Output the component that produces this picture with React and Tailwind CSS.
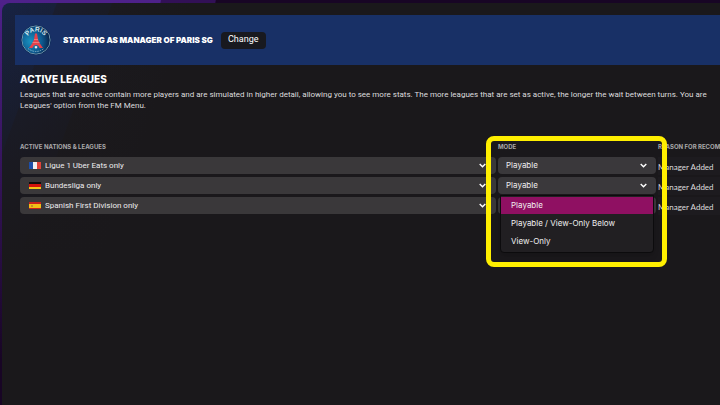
import React from 'react'

const leagues = [
  { name: 'Ligue 1 Uber Eats only', flag: 'fr', reason: 'Manager Added' },
  { name: 'Bundesliga only', flag: 'de', reason: 'Manager Added' },
  { name: 'Spanish First Division only', flag: 'es', reason: 'Manager Added' },
]

const modes = ['Playable', 'Playable / View-Only Below', 'View-Only']

const Flag = ({ code }) => (
  <svg viewBox="0 0 12 7" className="w-3 h-[7px]" aria-hidden="true">
    {code === 'fr' && (
      <>
        <rect width="12" height="7" fill="#f1f1f1" />
        <rect width="4" height="7" fill="#1d4fa8" />
        <rect x="8" width="4" height="7" fill="#e0433a" />
      </>
    )}
    {code === 'de' && (
      <>
        <rect width="12" height="7" fill="#110d0c" />
        <rect y="2" width="12" height="3" fill="#d3120b" />
        <rect y="5" width="12" height="2" fill="#f3c318" />
      </>
    )}
    {code === 'es' && (
      <>
        <rect width="12" height="7" fill="#c9201c" />
        <rect y="2" width="12" height="4" fill="#f0bd17" />
        <rect x="2" y="3" width="2" height="2" fill="#c58a2a" />
      </>
    )}
  </svg>
)

const Chevron = ({ className }) => (
  <svg viewBox="0 0 7 5" className={`absolute w-[7px] h-[5px] pointer-events-none ${className}`} aria-hidden="true">
    <path d="M0.7 0.9 L3.5 3.7 L6.3 0.9" fill="none" stroke="#ffffff" strokeWidth="1.4" />
  </svg>
)

const Crest = () => (
  <svg viewBox="0 0 60 60" className="w-[30px] h-[30px] shrink-0" role="img" aria-label="Paris SG">
    <defs>
      <radialGradient id="crestBlue" cx="30%" cy="55%" r="70%">
        <stop offset="0" stopColor="#1a93c0" />
        <stop offset="0.6" stopColor="#0d5a90" />
        <stop offset="1" stopColor="#09264e" />
      </radialGradient>
      <path id="crestTop" d="M12 29 A18 16 0 0 1 48 29" />
    </defs>
    <circle cx="30" cy="30" r="29.5" fill="#0a2d55" />
    <circle cx="30" cy="30" r="28" fill="none" stroke="#9dc0d0" strokeWidth="1.6" />
    <circle cx="30" cy="30" r="27" fill="url(#crestBlue)" />
    <text fontFamily="Liberation Sans, sans-serif" fontSize="13" fontWeight="700" fill="#d4e8ee" textAnchor="middle">
      <textPath href="#crestTop" startOffset="50%">PARIS</textPath>
    </text>
    {/* tower */}
    <path d="M28 17 H32 L34 29 L37 36 L44 46 H37 Q35 40 30 40 Q25 40 23 46 H16 L23 36 L26 29 Z" fill="#e5424b" />
    <path d="M23 35 H37 M26 29 H34" stroke="#f08b86" strokeWidth="1.5" />
    <path d="M27 44 Q30 40 33 44 L31 47 H29 Z" fill="#eef2f2" />
    <path d="M14 47 Q30 59 46 47" fill="none" stroke="#8fb9cd" strokeWidth="1.8" strokeDasharray="3 2" />
  </svg>
)

const ModeMenu = () => (
  <ul
    role="listbox"
    aria-label="Mode options"
    className="absolute z-10 top-[18px] left-[2px] right-[2px] h-[58px] pt-px rounded-b-sm border border-[#0c0b0d] bg-[#211f22] text-[#f0eff0] shadow-md"
  >
    {modes.map((mode, idx) => (
      <li
        key={mode}
        role="option"
        aria-selected={idx === 0}
        className={`h-[17px] pl-[10px] leading-[17px] mb-px ${idx === 0 ? 'bg-[#8f1062]' : ''}`}
      >
        {mode}
      </li>
    ))}
  </ul>
)

const LeagueTable = () => (
  <div className="relative mt-[30px]">
    <table className="w-full table-fixed border-collapse text-left">
      <colgroup>
        <col />
        <col className="w-[160px]" />
        <col className="w-[62px]" />
      </colgroup>
      <thead>
        <tr className="h-4 text-[6px] leading-3 text-[#a9a8aa] whitespace-nowrap">
          <th className="p-0 align-top font-bold">ACTIVE NATIONS &amp; LEAGUES</th>
          <th className="p-0 align-top font-bold">MODE</th>
          <th className="p-0 align-top font-bold">REASON FOR RECOM</th>
        </tr>
      </thead>
      <tbody>
        {leagues.map((league, idx) => (
          <tr key={league.name} className="h-5">
            <td className="p-0 pr-[2px] align-top">
              <div className="relative">
                <span className="absolute left-[9px] top-[5px]">
                  <Flag code={league.flag} />
                </span>
                <select
                  aria-label="League"
                  className="block w-full h-[17px] pl-[25px] appearance-none rounded-sm bg-[#3a383a] text-[#eeedee] font-['Roboto',sans-serif] text-[8px] leading-[17px]"
                >
                  <option>{league.name}</option>
                </select>
                <Chevron className="right-[10px] top-[6px]" />
              </div>
            </td>
            <td className="p-0 pr-[2px] align-top">
              <div className="relative">
                <select
                  aria-label={`Mode for ${league.name}`}
                  className="block w-full h-[17px] pl-2 appearance-none rounded-sm bg-[#3a383b] text-[#eeedee] text-[8px] leading-[17px]"
                >
                  {modes.map((mode) => (
                    <option key={mode}>{mode}</option>
                  ))}
                </select>
                <Chevron className="right-[9px] top-[6px]" />
                {idx === 1 && <ModeMenu />}
              </div>
            </td>
            <td className="p-0 align-top">
              <div className="h-[18px] leading-5 font-['Lato',sans-serif] bg-[#1d1b1f] text-[#dddcde] whitespace-nowrap">{league.reason}</div>
            </td>
          </tr>
        ))}
      </tbody>
    </table>
    {/* highlight around the mode column */}
    <div className="absolute z-20 -top-[5px] right-[53px] w-[181px] h-[131px] rounded-lg border-5 border-[#ffef00] pointer-events-none" />
  </div>
)

const App = () => {
  return (
    <div className="min-h-screen flex flex-col overflow-hidden pt-[3px] pl-[2px] bg-[linear-gradient(to_bottom,transparent,#180525_360px),linear-gradient(100deg,#4e218a_0,#4e218a_158px,#321057_159px,#321057_212px,#180525_213px)] font-['Inter',sans-serif] text-[8px]">
      <main className="grow pt-3 rounded-tl-lg bg-[#1a181b] bg-[linear-gradient(to_bottom,transparent,#1a181b_260px),linear-gradient(110deg,#172345_0,#18203a_51px,#1a1d2e_52px,#1a1b26_103px,#1b1a1f_104px,#1a181b_180px)]">
        <header className="ml-[13px] h-[50px] pl-[6px] flex items-center bg-[#183066]">
          <Crest />
          <h1 className="ml-3 font-black text-white whitespace-nowrap">STARTING AS MANAGER OF PARIS SG</h1>
          <button className="ml-2 w-[45px] h-[17px] rounded-sm bg-[#18191f] font-['Roboto',sans-serif] text-[9px] text-white">Change</button>
        </header>
        <section className="pl-[18px] pt-2">
          <h2 className="text-[10px] leading-3 font-extrabold text-white">ACTIVE LEAGUES</h2>
          <p className="mt-1 leading-[11px] font-['Roboto',sans-serif] text-[#dddcde] whitespace-nowrap">
            Leagues that are active contain more players and are simulated in higher detail, allowing you to see more stats. The more leagues that are set as active, the longer the wait between turns. You are
            <br />
            Leagues&apos; option from the FM Menu.
          </p>
          <LeagueTable />
        </section>
      </main>
    </div>
  )
}

export default App
